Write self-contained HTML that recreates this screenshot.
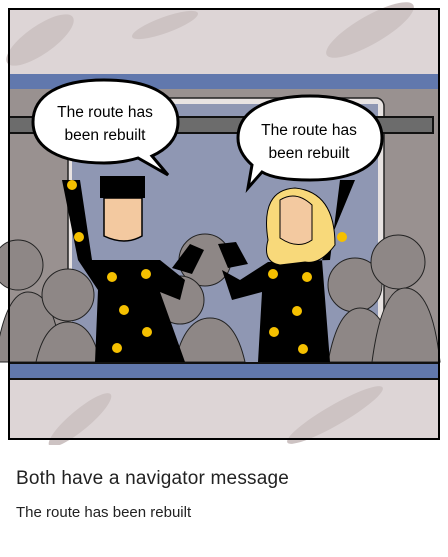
<!DOCTYPE html>
<html><head><meta charset="utf-8"><style>
body{margin:0;width:448px;height:557px;background:#fff;font-family:"Liberation Sans",sans-serif;overflow:hidden;position:relative}
svg{position:absolute;left:0;top:0}
.t1{position:absolute;left:16px;top:468px;font-size:19px;color:#222;letter-spacing:0.2px}
.t2{position:absolute;left:16px;top:504px;font-size:15px;color:#222}
</style></head><body>
<svg width="448" height="445" viewBox="0 0 448 445">
<rect x="9" y="9" width="430" height="430" fill="#ddd5d6"/>
<ellipse cx="40" cy="40" rx="40" ry="14" fill="#cdc3c3" transform="rotate(-35 40 40)"/>
<ellipse cx="165" cy="25" rx="35" ry="8" fill="#cdc3c3" transform="rotate(-20 165 25)"/>
<ellipse cx="370" cy="30" rx="50" ry="14" fill="#cdc3c3" transform="rotate(-30 370 30)"/>
<rect x="9" y="74" width="430" height="15" fill="#6178ad"/>
<rect x="9" y="89" width="430" height="274" fill="#999190"/>
<rect x="68" y="98" width="316" height="266" rx="8" fill="#e8e3e2" stroke="#222" stroke-width="1.5"/>
<rect x="72" y="104" width="306" height="260" fill="#8f97b3"/>
<rect x="9" y="117" width="424" height="16" fill="#6c6c6c" stroke="#111" stroke-width="2"/>
<g fill="#8e8786" stroke="#222" stroke-width="1">
<circle cx="18" cy="265" r="25"/><path d="M-5 362 Q5 292 28 292 Q55 292 62 362Z"/>
<circle cx="68" cy="295" r="26"/><path d="M36 362 Q45 322 68 322 Q92 322 100 362Z"/>
<circle cx="205" cy="260" r="26"/><circle cx="180" cy="300" r="24"/>
<path d="M175 362 Q185 318 210 318 Q235 318 245 362Z"/>
<circle cx="355" cy="285" r="27"/><circle cx="398" cy="262" r="27"/>
<path d="M328 362 Q338 308 360 308 Q385 308 395 362Z"/>
<path d="M372 362 Q382 288 405 288 Q432 288 440 362Z"/>
</g>
<!-- man -->
<path d="M62 180 L80 180 L92 260 L160 260 L185 280 L180 300 L160 292 L185 362 L95 362 L98 290 L78 260 Z" fill="#000"/>
<rect x="100" y="176" width="45" height="22" fill="#000"/>
<path d="M104 198 L142 198 L142 236 Q125 246 104 236 Z" fill="#f3c9a0" stroke="#000" stroke-width="1.5"/>
<path d="M172 268 L190 244 L204 250 L192 274 Z" fill="#000"/>
<!-- woman -->
<path d="M355 180 L340 180 L330 260 L268 262 L240 280 L222 270 L232 300 L262 292 L258 362 L330 362 L322 260 Z" fill="#000"/>
<path d="M268 240 Q260 190 295 188 Q335 192 335 245 Q320 265 305 262 L280 265 Q262 262 268 240Z" fill="#f8d97a" stroke="#000" stroke-width="1"/>
<path d="M280 200 Q296 190 312 205 L312 240 Q298 250 280 238 Z" fill="#f3c9a0" stroke="#000" stroke-width="1"/>
<path d="M218 244 L236 242 L248 264 L228 268 Z" fill="#000"/>
<g fill="#f5c000">
<circle cx="72" cy="185" r="5"/><circle cx="79" cy="237" r="5"/><circle cx="112" cy="277" r="5"/><circle cx="146" cy="274" r="5"/><circle cx="124" cy="310" r="5"/><circle cx="147" cy="332" r="5"/><circle cx="117" cy="348" r="5"/>
<circle cx="342" cy="237" r="5"/><circle cx="273" cy="274" r="5"/><circle cx="307" cy="277" r="5"/><circle cx="297" cy="311" r="5"/><circle cx="274" cy="332" r="5"/><circle cx="303" cy="349" r="5"/>
</g>
<rect x="9" y="363" width="430" height="16" fill="#6178ad" stroke="#111" stroke-width="2"/>
<rect x="9" y="380" width="430" height="58" fill="#ddd5d6"/>
<ellipse cx="80" cy="420" rx="40" ry="10" fill="#cdc3c3" transform="rotate(-40 80 420)"/>
<ellipse cx="335" cy="415" rx="55" ry="10" fill="#cdc3c3" transform="rotate(-30 335 415)"/>
<rect x="9" y="9" width="430" height="430" fill="none" stroke="#000" stroke-width="2"/>
<!-- bubbles -->
<path d="M104 80 C150 80 178 95 178 122 C178 140 165 150 152 156 L168 175 L138 158 C125 162 112 163 104 163 C60 163 33 148 33 122 C33 95 60 80 104 80Z" fill="#fff" stroke="#000" stroke-width="3"/>
<text x="105" y="117" font-size="15.5" text-anchor="middle" font-family="Liberation Sans">The route has</text>
<text x="105" y="140" font-size="15.5" text-anchor="middle" font-family="Liberation Sans">been rebuilt</text>
<path d="M310 96 C355 96 382 112 382 138 C382 165 355 180 310 180 C290 180 272 178 262 172 L248 188 L252 165 C243 157 238 148 238 138 C238 112 265 96 310 96Z" fill="#fff" stroke="#000" stroke-width="3"/>
<text x="309" y="135" font-size="15.5" text-anchor="middle" font-family="Liberation Sans">The route has</text>
<text x="309" y="158" font-size="15.5" text-anchor="middle" font-family="Liberation Sans">been rebuilt</text>
</svg>
<div class="t1">Both have a navigator message</div>
<div class="t2">The route has been rebuilt</div>
</body></html>
